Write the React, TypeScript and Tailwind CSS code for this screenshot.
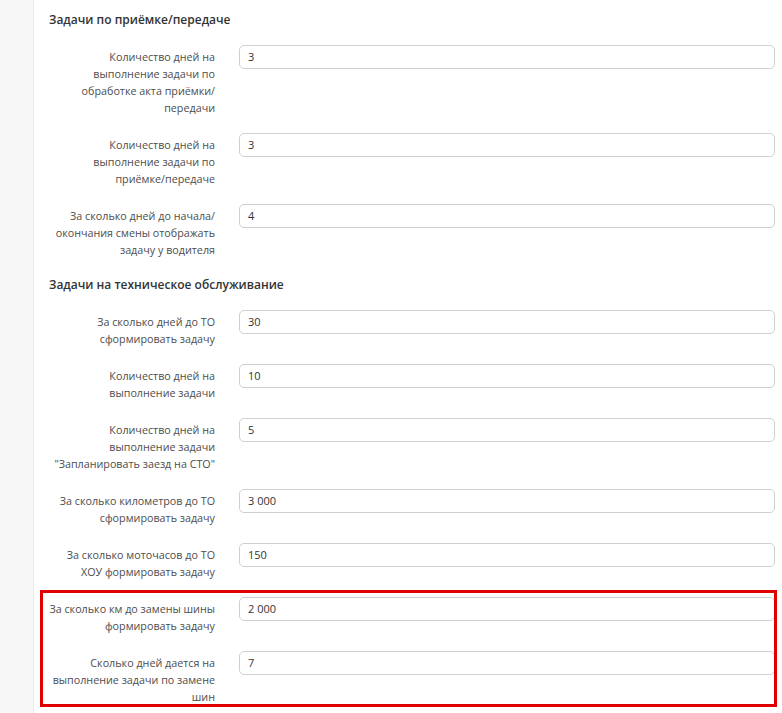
import React from "react";

type Row = { label: string[]; value: string };

const sec1: Row[] = [
  { label: ["Количество дней на", "выполнение задачи по", "обработке акта приёмки/", "передачи"], value: "3" },
  { label: ["Количество дней на", "выполнение задачи по", "приёмке/передаче"], value: "3" },
  { label: ["За сколько дней до начала/", "окончания смены отображать", "задачу у водителя"], value: "4" },
];

const sec2: Row[] = [
  { label: ["За сколько дней до ТО", "сформировать задачу"], value: "30" },
  { label: ["Количество дней на", "выполнение задачи"], value: "10" },
  { label: ["Количество дней на", "выполнение задачи", "\"Запланировать заезд на СТО\""], value: "5" },
  { label: ["За сколько километров до ТО", "сформировать задачу"], value: "3 000" },
  { label: ["За сколько моточасов до ТО", "ХОУ формировать задачу"], value: "150" },
];

const sec3: Row[] = [
  { label: ["За сколько км до замены шины", "формировать задачу"], value: "2 000" },
  { label: ["Сколько дней дается на", "выполнение задачи по замене", "шин"], value: "7" },
];

function FieldRow({ row, last }: { row: Row; last?: boolean }) {
  return (
    <div className={"flex items-start " + (last ? "" : "mb-[16px]")}>
      <div className="w-[166px] shrink-0 pt-[4px] text-right text-[10.75px] leading-[17px] text-[#4d4d4d]">
        {row.label.map((l, i) => (
          <div key={i} className="whitespace-nowrap">{l}</div>
        ))}
      </div>
      <div className="ml-[24px] flex h-[24px] flex-1 items-center rounded-[5px] border border-[#cfcfcf] bg-white pl-[8px] text-[11px] text-[#333]">
        {row.value}
      </div>
    </div>
  );
}

export default function App() {
  return (
    <div
      className="flex min-h-[713px] w-[782px] overflow-hidden bg-white"
      style={{ fontFamily: '"Open Sans", "Noto Sans", Arial, sans-serif' }}
    >
      <div className="w-[34px] shrink-0 border-r border-[#ebebeb] bg-[#f7f7f7]" />
      <div className="flex-1 pl-[15px] pr-[7px] pt-[10px]">
        <div className="mb-[15px] h-[20px] text-[12px] font-semibold leading-[20px] text-[#333]">
          Задачи по приёмке/передаче
        </div>
        {sec1.map((r, i) => (
          <FieldRow key={i} row={r} last={i === sec1.length - 1} />
        ))}
        <div className="mb-[15px] mt-[16px] h-[20px] text-[12px] font-semibold leading-[20px] text-[#333]">
          Задачи на техническое обслуживание
        </div>
        {sec2.map((r, i) => (
          <FieldRow key={i} row={r} />
        ))}
        <div className="relative mt-[2px]">
          <div className="pointer-events-none absolute -left-[9px] -right-[2px] -top-[7px] -bottom-[1px] border-[3px] border-[#e00000]" />
          {sec3.map((r, i) => (
            <FieldRow key={i} row={r} last={i === sec3.length - 1} />
          ))}
        </div>
      </div>
    </div>
  );
}
